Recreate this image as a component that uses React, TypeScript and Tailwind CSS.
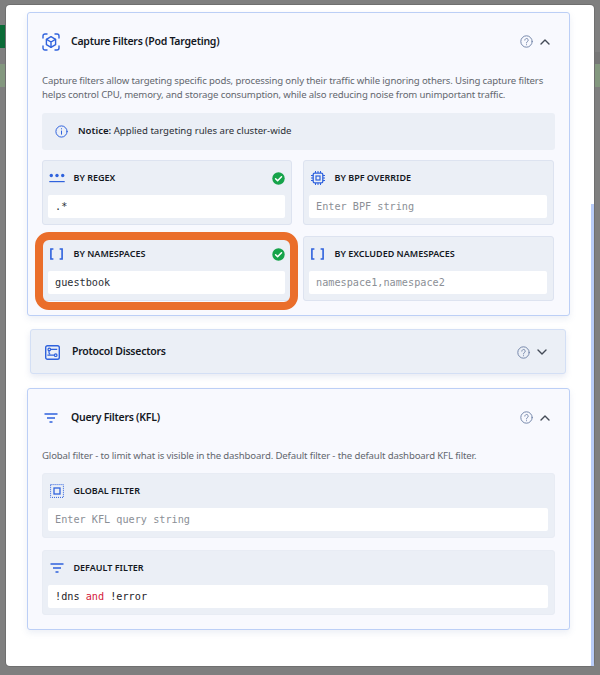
import type { ReactNode } from 'react'

const sans = "font-['Noto_Sans',sans-serif]"
const mono = "font-['DejaVu_Sans_Mono',monospace]"

function CubeIcon() {
  return (
    <svg width="18" height="18" viewBox="0 0 18 18" fill="none" stroke="#2f62dd" strokeWidth="1.4" strokeLinecap="round" strokeLinejoin="round">
      <path d="M1 5V3a2 2 0 0 1 2-2h2M13 1h2a2 2 0 0 1 2 2v2M17 13v2a2 2 0 0 1-2 2h-2M5 17H3a2 2 0 0 1-2-2v-2" />
      <path d="M9 3.6l4.6 2.7v5.4L9 14.4l-4.6-2.7V6.3z" />
      <path d="M4.6 6.4L9 9l4.4-2.6M9 9v5.2" />
    </svg>
  )
}

function HelpIcon() {
  return (
    <svg width="13" height="13" viewBox="0 0 13 13" fill="none" stroke="#7688ab" strokeWidth="1" strokeLinecap="round">
      <circle cx="6.5" cy="6.5" r="5.7" />
      <path d="M4.8 5.1a1.7 1.7 0 1 1 2.6 1.5c-.6.4-.9.7-.9 1.3" />
      <path d="M6.5 9.7v.1" />
    </svg>
  )
}

function Chevron({ up }: { up?: boolean }) {
  return (
    <svg width="10" height="6" viewBox="0 0 10 6" fill="none" stroke="#444b57" strokeWidth="1.4" strokeLinecap="round" strokeLinejoin="round">
      <path d={up ? 'M1 5l4-4 4 4' : 'M1 1l4 4 4-4'} />
    </svg>
  )
}

function InfoIcon() {
  return (
    <svg width="13" height="13" viewBox="0 0 13 13" fill="none" stroke="#2f62dd" strokeWidth="1" strokeLinecap="round">
      <circle cx="6.5" cy="6.5" r="5.6" />
      <path d="M6.5 6v3.2M6.5 3.7v.2" />
    </svg>
  )
}

function CheckIcon() {
  return (
    <svg width="13" height="13" viewBox="0 0 13 13" fill="none">
      <circle cx="6.5" cy="6.5" r="6.2" fill="#16a34a" />
      <path d="M3.6 6.7l2 2 3.9-4" stroke="#fff" strokeWidth="1.5" strokeLinecap="round" strokeLinejoin="round" />
    </svg>
  )
}

function RegexIcon() {
  return (
    <svg width="16" height="10" viewBox="0 0 16 10" fill="#2f62dd">
      <circle cx="2.3" cy="2.5" r="1.7" />
      <circle cx="8" cy="2.5" r="1.7" />
      <circle cx="13.7" cy="2.5" r="1.7" />
      <rect x="0.3" y="8" width="15.4" height="1.2" />
    </svg>
  )
}

function ChipIcon() {
  return (
    <svg width="14" height="14" viewBox="0 0 14 14" fill="none" stroke="#2f62dd" strokeWidth="1.3">
      <rect x="2.2" y="2.2" width="9.6" height="9.6" rx="1.4" />
      <rect x="5" y="5" width="4" height="4" strokeWidth="1.2" />
      <path d="M4.5 0v2M7 0v2M9.5 0v2M4.5 12v2M7 12v2M9.5 12v2M0 4.5h2M0 7h2M0 9.5h2M12 4.5h2M12 7h2M12 9.5h2" strokeWidth="1" />
    </svg>
  )
}

function BracketsIcon() {
  return (
    <svg width="13" height="12" viewBox="0 0 13 12" fill="none" stroke="#2f62dd" strokeWidth="1.6">
      <path d="M3.4 1H.9v10h2.5M9.6 1h2.5v10H9.6" />
    </svg>
  )
}

function RouteIcon() {
  return (
    <svg width="15" height="15" viewBox="0 0 15 15" fill="none" stroke="#2f62dd" strokeWidth="1.2">
      <rect x="0.7" y="0.7" width="13.6" height="13.6" rx="1.8" strokeWidth="1.4" />
      <circle cx="4.3" cy="4.4" r="1.3" />
      <circle cx="10.7" cy="10.2" r="1.3" />
      <path d="M5.6 4.4h6.6M2.4 10.2h7M4 5.7v2c0 .8.5 1.2 1.2 1.2" />
    </svg>
  )
}

function FilterIcon() {
  return (
    <svg width="14" height="10" viewBox="0 0 14 10" fill="none" stroke="#2f62dd" strokeWidth="1.3">
      <path d="M0.5 1h13M3 5h8M5.5 9h3" />
    </svg>
  )
}

function FocusIcon() {
  return (
    <svg width="14" height="14" viewBox="0 0 14 14" fill="none" stroke="#2f62dd">
      <rect x="0.6" y="0.6" width="12.8" height="12.8" strokeWidth="1" strokeDasharray="1 1" />
      <rect x="4" y="4" width="6" height="6" strokeWidth="1.3" />
    </svg>
  )
}

function SectionHeader({ icon, title, tall, iconBox }: { icon: ReactNode; title: string; tall?: boolean; iconBox?: string }) {
  return (
    <div className={`flex items-center ${tall ? 'h-[43px] pt-[1px] pl-[14px] pr-[18px]' : 'h-[57px] pl-[13px] pr-[19px]'}`}>
      <div className={`flex justify-center ${iconBox ?? 'w-[20px] mr-[10px]'}`}>{icon}</div>
      <span className={`${sans} text-[10.5px] font-semibold tracking-[-0.25px] text-[#14181f] flex-1`}>{title}</span>
      <HelpIcon />
      <div className="w-[10px] ml-[7px] flex items-center">
        <Chevron up={!tall} />
      </div>
    </div>
  )
}

function FilterBox({ icon, label, value, placeholder, ok, bordered }: { icon: ReactNode; label: string; value?: ReactNode; placeholder?: string; ok?: boolean; bordered?: boolean }) {
  return (
    <div className={`h-[65px] rounded-[3px] bg-[#ebeff6] pl-[5px] pr-[6px] ${bordered ? 'border border-[#dde3f0]' : 'border border-[#e8ecf4]'}`}>
      <div className="flex items-center h-[34px]">
        <div className="w-[19px] -ml-[1px] flex justify-center shrink-0">{icon}</div>
        <span className={`${sans} ml-[7.5px] flex-1 text-[9px] font-semibold text-[#14181f] whitespace-nowrap`}>{label}</span>
        {ok && <CheckIcon />}
      </div>
      <div className={`${mono} flex items-center h-[23px] rounded-[2px] bg-white pl-[7px] pt-[1px] text-[10.2px] ${value ? 'text-[#2a2e35]' : 'text-[#8b8f96]'}`}>
        {value ?? placeholder}
      </div>
    </div>
  )
}

export default function App() {
  return (
    <div className="relative h-[675px] w-[600px] overflow-hidden bg-[#7f7f7f]">
      {/* page peeking out from behind the modal */}
      <div className="absolute left-0 top-[25px] h-[23px] w-[7px] bg-[#0b6b37]" />
      <div className="absolute left-0 top-[64px] h-[23px] w-[7px] bg-[#84987f]" />
      <div className="absolute right-0 top-[52px] h-[12px] w-[6px] bg-[#777777]" />
      <div className="absolute right-0 top-[64px] h-[23px] w-[6px] bg-[#84987f]" />

      <div className="absolute left-[6px] top-[5px] h-[661px] w-[588px] rounded-[4px] bg-white pt-[7px] pl-[21px] shadow-[0_0_0_1px_#6f6f6f]">
        <div className="w-[543px] rounded-[3px] border border-[#bccff6] bg-[#f8f9fe] shadow-[0_3px_6px_rgba(120,140,190,0.14)] h-[304px]">
          <SectionHeader icon={<CubeIcon />} title="Capture Filters (Pod Targeting)" />
          <p className={`${sans} px-[14px] pt-[4px] text-[9.6px] tracking-[-0.14px] leading-[14px] text-[#63676e]`}>
            Capture filters allow targeting specific pods, processing only their traffic while ignoring others. Using capture filters helps control CPU, memory, and storage consumption, while also reducing noise from unimportant traffic.
          </p>
          <div className={`${sans} mx-[14px] mt-[11px] flex h-[37px] items-center rounded-[3px] bg-[#ebeff6] pl-[13px] text-[9.6px] text-[#2a2e35]`}>
            <InfoIcon />
            <span className="ml-[10px]">
              <b className="font-semibold text-[#14181f]">Notice:</b> Applied targeting rules are cluster-wide
            </span>
          </div>
          <div className="mx-[14px] mt-[10px] grid grid-cols-[250px_251px] gap-x-[11px] gap-y-[11px]">
            <FilterBox icon={<RegexIcon />} label="BY REGEX" value=".*" ok bordered />
            <FilterBox icon={<ChipIcon />} label="BY BPF OVERRIDE" placeholder="Enter BPF string" bordered />
            <div className="relative">
              <FilterBox icon={<BracketsIcon />} label="BY NAMESPACES" value="guestbook" ok bordered />
              <div className="absolute -left-[7px] -right-[6px] -top-[4px] -bottom-[9px] rounded-[14px] border-[8px] border-[#ea6e2b]" />
            </div>
            <FilterBox icon={<BracketsIcon />} label="BY EXCLUDED NAMESPACES" placeholder="namespace1,namespace2" bordered />
          </div>
        </div>

        <div className="ml-[3px] mt-[13px] w-[536px] rounded-[3px] border border-[#d3dff5] bg-[#ebeff6] shadow-[0_3px_6px_rgba(120,140,190,0.18)]">
          <SectionHeader icon={<RouteIcon />} title="Protocol Dissectors" tall iconBox="w-[15px] mr-[12px]" />
        </div>

        <div className="mt-[14px] w-[543px] h-[242px] rounded-[3px] border border-[#bccff6] bg-[#f8f9fe] shadow-[0_3px_6px_rgba(120,140,190,0.14)]">
          <SectionHeader icon={<FilterIcon />} title="Query Filters (KFL)" />
          <p className={`${sans} px-[14px] pt-[3px] text-[9.6px] tracking-[-0.14px] leading-[14px] text-[#63676e]`}>
            Global filter - to limit what is visible in the dashboard. Default filter - the default dashboard KFL filter.
          </p>
          <div className="mx-[14px] mt-[10px] flex flex-col gap-[12px]">
            <FilterBox icon={<FocusIcon />} label="GLOBAL FILTER" placeholder="Enter KFL query string" />
            <FilterBox
              icon={<FilterIcon />}
              label="DEFAULT FILTER"
              value={
                <span className="text-[#1d2128]">
                  !dns <span className="text-[#d4213d]">and</span> !error
                </span>
              }
            />
          </div>
        </div>

        {/* scrollbar thumb */}
        <div className="absolute right-0 top-[199px] bottom-0 w-[3px] bg-[#b8ccf8]" />
      </div>
    </div>
  )
}
